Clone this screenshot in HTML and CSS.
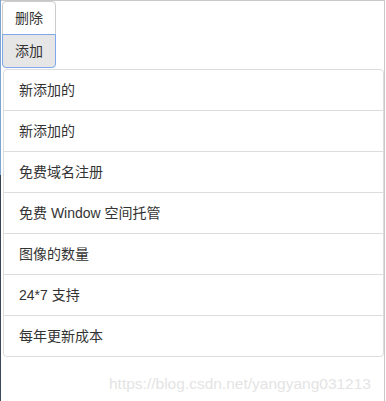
FILE: index.html
```html
<!DOCTYPE html>
<html lang="zh">
<head>
<meta charset="utf-8">
<title>list</title>
<link rel="stylesheet" href="styles.css">
</head>
<body>
<div class="frame">
  <div class="btn-group">
    <div class="btn" role="button">删除</div>
    <div class="btn btn-active" role="button">添加</div>
  </div>
  <ul class="list-group">
    <li class="list-item">新添加的</li>
    <li class="list-item">新添加的</li>
    <li class="list-item">免费域名注册</li>
    <li class="list-item">免费 Window 空间托管</li>
    <li class="list-item">图像的数量</li>
    <li class="list-item">24*7 支持</li>
    <li class="list-item">每年更新成本</li>
  </ul>
  <div class="watermark">https://blog.csdn.net/yangyang031213</div>
</div>
</body>
</html>
```

FILE: styles.css
```css
html, body {
  margin: 0;
  padding: 0;
}
body {
  font-family: "Liberation Sans", "Noto Sans CJK SC", sans-serif;
  font-size: 14px;
  line-height: 20px;
  color: #333;
  background: linear-gradient(to bottom, #7da3cf 0, #7da3cf 175px, #34414f 175px, #3c4b5b 100%) no-repeat 0 0 / 1px 100%, #fff;
  min-height: 401px;
}
.frame {
  box-sizing: border-box;
  width: 384px;
  height: 401px;
  margin-left: 1px;
  border-top: 1px solid #c8c8c8;
  border-right: 1px solid #c8c8c8;
  padding-left: 1px;
  display: flex;
  flex-direction: column;
}
.btn-group {
  display: grid;
  grid-template-columns: max-content;
  align-self: flex-start;
}
.btn {
  font-size: 14px;
  line-height: 20px;
  color: #333;
  background: #fff;
  border: 1px solid #ccc;
  padding: 6px 12px;
  white-space: nowrap;
  text-align: center;
  border-radius: 4px 4px 0 0;
}
.btn-active {
  margin-top: -1px;
  background: #e6e6e6;
  border-color: #7ea8ea;
  border-radius: 0 0 4px 4px;
}
.list-group {
  list-style: none;
  margin: 1px 0 0 1px;
  padding: 0;
}
.list-item {
  border: 1px solid #ddd;
  padding: 10px 15px;
  margin-bottom: -1px;
  background: #fff;
}
.list-item:first-child {
  border-radius: 4px 4px 0 0;
}
.list-item:last-child {
  border-radius: 0 0 4px 4px;
  margin-bottom: 0;
}
.watermark {
  margin-top: 17px;
  padding-left: 107px;
  font-size: 15.5px;
  line-height: 20px;
  color: #e4e4e4;
  white-space: nowrap;
}
```
